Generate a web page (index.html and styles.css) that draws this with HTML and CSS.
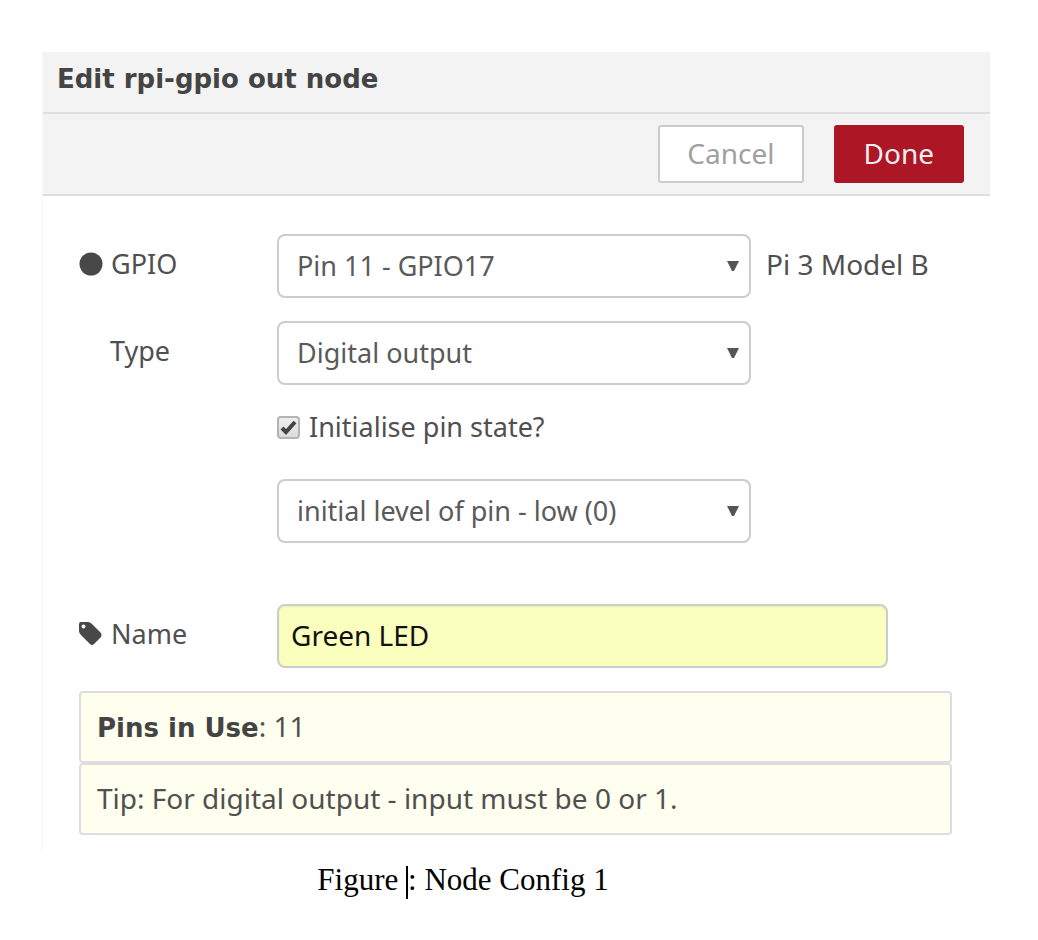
FILE: index.html
```html
<!DOCTYPE html>
<html lang="en">
<head>
<meta charset="utf-8">
<title>Edit rpi-gpio out node</title>
<link rel="stylesheet" href="styles.css">
</head>
<body>
<figure class="figure">
  <form class="editor">
    <h1 class="editor-title">Edit rpi-gpio out node</h1>
    <div class="toolbar">
      <button type="button" class="button">Cancel</button>
      <button type="button" class="button button-primary">Done</button>
    </div>
    <div class="fields">
      <div class="row">
        <label class="label" for="pin">
          <svg class="icon" viewBox="0 0 24 24" aria-hidden="true"><circle cx="12" cy="12" r="11.500"/></svg>
          GPIO
        </label>
        <span class="select-wrap">
          <select class="control" id="pin"><option>Pin 11 - GPIO17</option></select>
          <svg class="arrow" viewBox="0 0 12 12" aria-hidden="true"><path d="M0 1h12L7 11H5z"/></svg>
        </span>
        <span class="model">Pi 3 Model B</span>
      </div>
      <div class="row">
        <label class="label label-plain" for="type">Type</label>
        <span class="select-wrap">
          <select class="control" id="type"><option>Digital output</option></select>
          <svg class="arrow" viewBox="0 0 12 12" aria-hidden="true"><path d="M0 1h12L7 11H5z"/></svg>
        </span>
      </div>
      <div class="row row-indent row-check">
        <span class="check-wrap">
          <input class="check" type="checkbox" id="init" checked>
          <svg class="check-mark" viewBox="0 0 23 23" aria-hidden="true"><path d="M5 12L9 16L18 6"/></svg>
        </span>
        <label for="init">Initialise pin state?</label>
      </div>
      <div class="row row-indent">
        <span class="select-wrap">
          <select class="control" id="level" aria-label="Initial level"><option>initial level of pin - low (0)</option></select>
          <svg class="arrow" viewBox="0 0 12 12" aria-hidden="true"><path d="M0 1h12L7 11H5z"/></svg>
        </span>
      </div>
      <div class="row row-name">
        <label class="label" for="name">
          <svg class="icon" viewBox="0 0 24 24" aria-hidden="true"><path fill-rule="evenodd" d="M0 2Q0 0 2 0H9Q11 0 13 2L22 11Q23 13 22 15L15 22Q13 24 11 22L2 13Q0 11 0 9ZM4.500 2.500A2 2 0 1 0 4.500 6.500A2 2 0 1 0 4.500 2.500Z"/></svg>
          Name
        </label>
        <input class="control control-name" type="text" id="name" value="Green LED">
      </div>
      <div class="tip"><b>Pins in Use</b>: 11</div>
      <div class="tip">Tip: For digital output - input must be 0 or 1.</div>
    </div>
  </form>
  <figcaption class="caption">Figure <span class="caret"></span>: Node Config 1</figcaption>
</figure>
</body>
</html>
```
FILE: styles.css
```css
* { box-sizing: border-box; }
body { margin: 0; background: #fff; }
.figure { margin: 52px 48px 0 42px; }
.editor {
  border-left: 1px solid #f7f7f7;
  color: #505050;
  font: 27px/40px "Noto Sans", sans-serif;
}
.editor-title {
  margin: 0;
  padding: 7px 14px 13px;
  border-bottom: 2px solid #dedede;
  background: #f3f3f3;
  color: #444;
  font: bold 26px/40px "DejaVu Sans", sans-serif;
}
.toolbar {
  display: flex;
  justify-content: flex-end;
  gap: 30px;
  padding: 11px 26px;
  border-bottom: 2px solid #dedede;
  background: #f3f3f3;
}
.button {
  height: 58px;
  padding: 0 27px 2px;
  border: 2px solid #ccc;
  border-radius: 3px;
  background: #fff;
  color: #a0a0a0;
  font: inherit;
  font-size: 28px;
}
.button-primary { padding: 0 28px 2px; border-color: #ad1625; background: #ad1625; color: #eee; }
.fields { padding: 38px 38px 18px 36px; }
.row { display: flex; align-items: center; margin-bottom: 23px; }
.row-indent { padding-left: 198px; }
.row-check { gap: 9px; height: 48px; padding-bottom: 10px; }
.row-name { margin-top: 61px; }
.label { display: flex; align-items: center; flex: 0 0 198px; gap: 8px; padding-bottom: 4px; }
.label-plain { padding-left: 31px; }
.icon { width: 24px; height: 24px; fill: #484848; }
.select-wrap { display: grid; flex: 0 1 474px; align-items: center; }
.control {
  grid-area: 1 / 1;
  width: 100%;
  height: 64px;
  padding: 0 18px;
  border: 2px solid #ccc;
  border-radius: 8px;
  background: #fff;
  color: #5a5a5a;
  font: inherit;
  appearance: none;
}
.arrow { grid-area: 1 / 1; justify-self: end; width: 12px; height: 12px; margin-right: 12px; fill: #555; pointer-events: none; }
.model { margin-left: 15px; padding-bottom: 4px; font-size: 28px; }
.check-wrap { display: grid; }
.check {
  grid-area: 1 / 1;
  width: 23px;
  height: 23px;
  margin: 0;
  border: 2px solid #b4b4b4;
  border-radius: 4px;
  background: linear-gradient(#eee, #dcdcdc);
  appearance: none;
}
.check-mark { grid-area: 1 / 1; width: 23px; height: 23px; fill: none; stroke: #444; stroke-width: 4; pointer-events: none; visibility: hidden; }
.check:checked + .check-mark { visibility: visible; }
.control-name { flex: 0 1 611px; padding: 0 12px 2px; background: #faffbd; color: #111; font-size: 28px; box-shadow: inset 0 1px 2px #e9eeb4; }
.tip {
  padding: 13px 16px 15px;
  border: 2px solid #ddd;
  border-radius: 4px;
  background: #ffffef;
  font-size: 28px;
}
.tip b { color: #444; font: bold 26px/1 "DejaVu Sans", sans-serif; }
.caption { padding: 8px 106px 0 0; color: #000; font: 31px/38px "Liberation Serif", serif; text-align: center; }
.caret { display: inline-block; width: 2px; height: 33px; background: #000; vertical-align: middle; }
```
